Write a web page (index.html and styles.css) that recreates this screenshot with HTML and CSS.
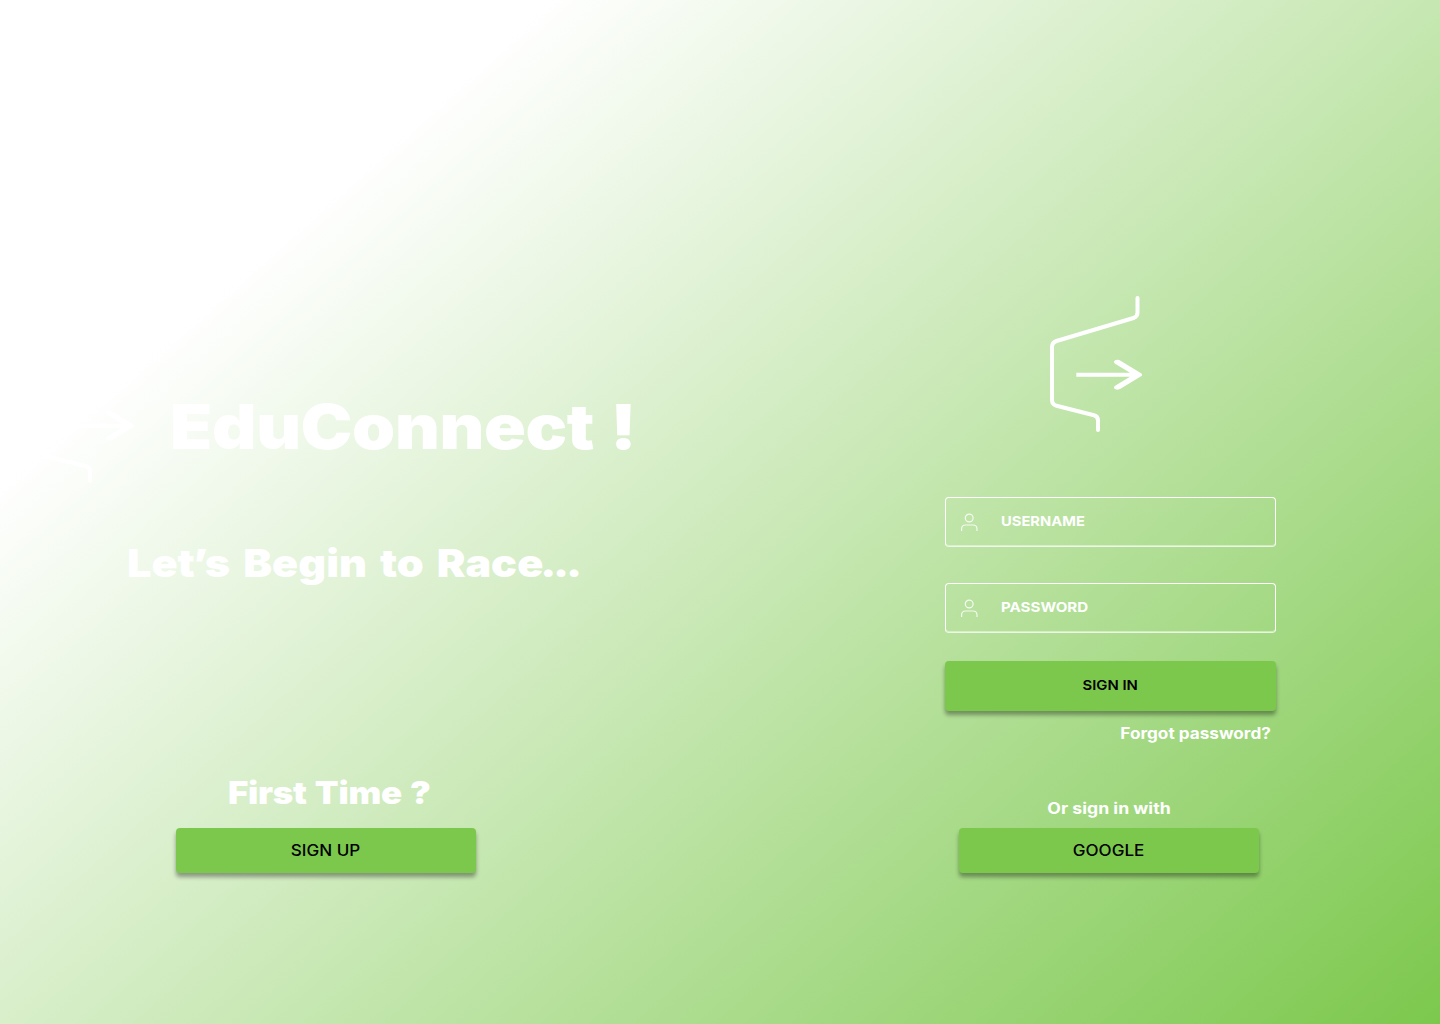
FILE: index.html
```html
<!DOCTYPE html>
<html lang="en">
<head>
<meta charset="utf-8">
<title>EduConnect</title>
<link rel="stylesheet" href="styles.css">
</head>
<body>
<svg width="0" height="0" class="defs" aria-hidden="true">
  <symbol id="logo" viewBox="0 0 92 136">
    <path d="M87.5 2V16.5Q87.5 20.8 83.5 22L6.5 45Q2 46.5 2 51V104Q2 108.5 6.5 109.7L44 119.2Q48 120.3 48 124.5V134" fill="none" stroke="#fff" stroke-width="4" stroke-linecap="round"/>
    <path d="M26.3 76.8V80.8H80L65.5 89.5Q63.2 91 64.3 92.6Q65.3 93.8 68 93.6Q69.3 93.5 70.5 92.8L91.5 80Q92.6 78.8 91.5 77.6L70.5 64.8Q69.3 64 68 63.8Q65.3 63.7 64.3 65Q63.2 66.6 65.5 68.1L80 76.8Z" fill="#fff"/>
  </symbol>
  <symbol id="user" viewBox="0 0 18 19">
    <path d="M.6 18V16Q.6 12 4.6 12H12Q16 12 16 16V18" fill="none" stroke="#fff" stroke-width="1.2"/>
    <circle cx="8.2" cy="5" r="3.9" fill="none" stroke="#fff" stroke-width="1.2"/>
  </symbol>
</svg>
<main class="page">
  <section class="intro">
    <div class="brand">
      <svg class="logo"><use href="#logo"/></svg>
      <h1 class="title">EduConnect !</h1>
    </div>
    <p class="tagline">Le<span class="quote">t’</span>s Begin to Rac<span class="dots">e...</span></p>
    <div class="signup">
      <h2 class="first">First Time ?</h2>
      <button class="btn btn-small"><span class="wide">SIGN UP</span></button>
    </div>
  </section>
  <section class="login">
    <svg class="logo login-logo"><use href="#logo"/></svg>
    <label class="field"><svg class="user"><use href="#user"/></svg><span class="name">USERNAME</span></label>
    <label class="field"><svg class="user"><use href="#user"/></svg><span class="name pass">PASSWORD</span></label>
    <button class="btn btn-main"><span class="wide">SIGN IN</span></button>
    <a class="forgot">Forgot password?</a>
    <div class="alt">
      <p class="or">Or sign in with</p>
      <button class="btn btn-small"><span class="wide">GOOGLE</span></button>
    </div>
  </section>
</main>
</body>
</html>
```
FILE: styles.css
```css
* { box-sizing: border-box; margin: 0; padding: 0; }
body { font-family: Inter, sans-serif; color: #fff; }
.defs { display: none; }
.page {
  display: grid;
  grid-template-columns: 945px 331px;
  width: 1440px;
  height: 1024px;
  overflow: hidden;
  background: linear-gradient(138.5deg, #fff 21%, #7cc84d 100%);
}
.logo { display: block; flex: none; width: 92px; height: 136px; }

.intro { display: flex; flex-direction: column; align-items: flex-start; padding-top: 347px; }
.brand { display: flex; align-items: flex-start; padding-left: 42px; gap: 36px; height: 136px; }
.title, .tagline, .first { font-weight: 900; white-space: nowrap; transform-origin: left; }
.title { margin-top: 41px; font-size: 62px; line-height: 78px; letter-spacing: -.3px; word-spacing: 2.5px; transform: scaleX(1.114); }
.tagline { margin: 56px 0 0 127px; font-size: 38.5px; line-height: 48px; word-spacing: 4px; transform: scaleX(1.12); }
.quote { letter-spacing: -2.7px; }
.dots { letter-spacing: -2.8px; }
.signup { margin: 187px 0 0 176px; }
.first { margin: 0 0 16px 52px; font-size: 31px; line-height: 38px; letter-spacing: -.25px; word-spacing: 1.4px; transform: scaleX(1.122); }

.btn {
  display: flex;
  align-items: center;
  justify-content: center;
  border: 0;
  border-radius: 4px;
  background: #7cc84d;
  color: #000;
  font-family: inherit;
  box-shadow: 0 4px 4px rgba(0, 0, 0, .36);
}
.btn-small { width: 300px; height: 45px; padding-bottom: 1px; font-size: 15.5px; font-weight: 500; }
.btn-main { width: 331px; height: 50px; margin-top: -8px; padding-bottom: 2px; font-size: 13.5px; font-weight: 600; }
.wide { display: inline-block; transform: scaleX(1.1); }

.login { display: flex; flex-direction: column; padding-top: 296px; }
.login-logo { margin: 0 0 65px 105px; }
.field {
  display: flex;
  align-items: center;
  gap: 22px;
  height: 50px;
  margin-bottom: 36px;
  padding-left: 15px;
  border: 1px solid #fff;
  border-bottom-color: rgba(255, 255, 255, .75);
  border-radius: 4px;
  box-shadow: inset 0 -1px rgba(255, 255, 255, .45);
}
.user { width: 18px; height: 19px; opacity: .85; }
.name { font-size: 13.5px; font-weight: 700; line-height: 16px; padding-bottom: 2px; transform: scaleX(1.09); transform-origin: left; }
.pass { transform: scaleX(1.12); }
.forgot { align-self: flex-end; margin: 13px 5px 0 0; font-size: 15.5px; font-weight: 700; line-height: 20px; transform: scaleX(1.108); transform-origin: right; }
.alt { width: 300px; margin: 55px 0 0 14px; }
.or { margin-bottom: 9px; font-size: 15.5px; font-weight: 700; line-height: 20px; text-align: center; transform: scaleX(1.14); }
```
